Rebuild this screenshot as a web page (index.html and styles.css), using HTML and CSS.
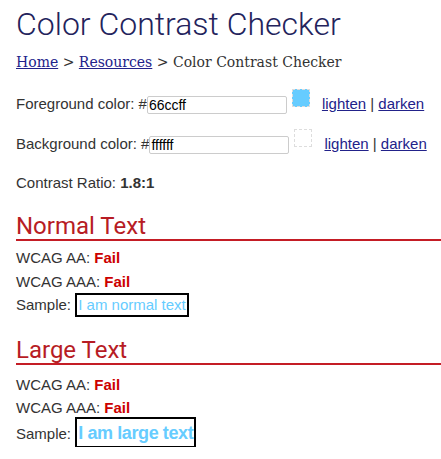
FILE: index.html
```html
<!DOCTYPE html>
<html lang="en">
<head>
    <meta charset="UTF-8">
    <title>Color Contrast Checker</title>
    <link rel="stylesheet" href="styles.css">
</head>
<body>
    <h1 class="title">Color Contrast Checker</h1>
    <p class="crumbs"><a href="#">Home</a> &gt; <a href="#">Resources</a> &gt; Color Contrast Checker</p>

    <div class="color-row">
        <label>Foreground color: #</label>
        <input class="hex" type="text" value="66ccff">
        <span class="swatch fg"></span>
        <span class="tweak"><a href="#">lighten</a> | <a href="#">darken</a></span>
    </div>
    <div class="color-row">
        <label>Background color: #</label>
        <input class="hex" type="text" value="ffffff">
        <span class="swatch bg"></span>
        <span class="tweak"><a href="#">lighten</a> | <a href="#">darken</a></span>
    </div>

    <p class="ratio">Contrast Ratio: <strong>1.8:1</strong></p>

    <section class="result">
        <h2>Normal Text</h2>
        <p>WCAG AA: <strong class="fail">Fail</strong></p>
        <p>WCAG AAA: <strong class="fail">Fail</strong></p>
        <p>Sample: <span class="sample">I am normal text</span></p>
    </section>

    <section class="result large-result">
        <h2>Large Text</h2>
        <p>WCAG AA: <strong class="fail">Fail</strong></p>
        <p>WCAG AAA: <strong class="fail">Fail</strong></p>
        <p class="sample-line">Sample: <span class="sample large">I am large text</span></p>
    </section>
</body>
</html>
```

FILE: styles.css
```css
body {
    margin: 0;
    padding: 0 0 0 16px;
    background: #fff;
    color: #333;
    font-family: 'Liberation Sans', Arial, sans-serif;
    font-size: 15px;
    overflow: hidden;
}

a {
    color: #22228a;
}

.title {
    margin: 4px 0 0;
    font-family: Roboto, sans-serif;
    font-weight: 300;
    font-size: 32px;
    line-height: 40px;
    color: #23235c;
}

.crumbs {
    margin: 8px 0 0;
    font-family: 'DejaVu Serif', serif;
    font-size: 14px;
    line-height: 20px;
    color: #333;
}

/* Colour inputs */
.color-row {
    display: flex;
    align-items: center;
    margin-top: 20px;
    height: 22px;
}

.color-row + .color-row {
    margin-top: 18px;
}

.hex {
    width: 140px;
    height: 18px;
    box-sizing: border-box;
    margin: 4px 0 0;
    padding: 0 1px;
    border: 1px solid #ccc;
    border-radius: 2px;
    font-family: 'Liberation Sans', sans-serif;
    font-size: 14px;
    color: #000;
}

.swatch {
    width: 18px;
    height: 18px;
    margin: -10px 0 0 5px;
    box-sizing: border-box;
    border: 1px dashed #ddd;
}

.swatch.fg {
    background: #66ccff;
}

.tweak {
    margin-left: 12px;
}

.ratio {
    margin: 20px 0 0;
}

/* Results */
.result h2 {
    margin: 22px 0 0;
    border-bottom: 2px solid #c41d25;
    font-family: Roboto, sans-serif;
    font-weight: 400;
    font-size: 24px;
    line-height: 26px;
    color: #b71c24;
}

.large-result h2 {
    margin-top: 20px;
}

.result p {
    margin: 0;
    line-height: 23.5px;
}

.result h2 + p {
    margin-top: 5px;
}

.large-result h2 + p {
    margin-top: 8px;
}

.large-result .sample-line {
    line-height: 27px;
}

.fail {
    color: #c00;
}

.sample {
    border: 2px solid #000;
    padding: 1px 1px 2px;
    color: #66ccff;
}

.sample.large {
    font-size: 18px;
    font-weight: bold;
    letter-spacing: -0.4px;
    padding: 4px 1px 3px;
}
```
